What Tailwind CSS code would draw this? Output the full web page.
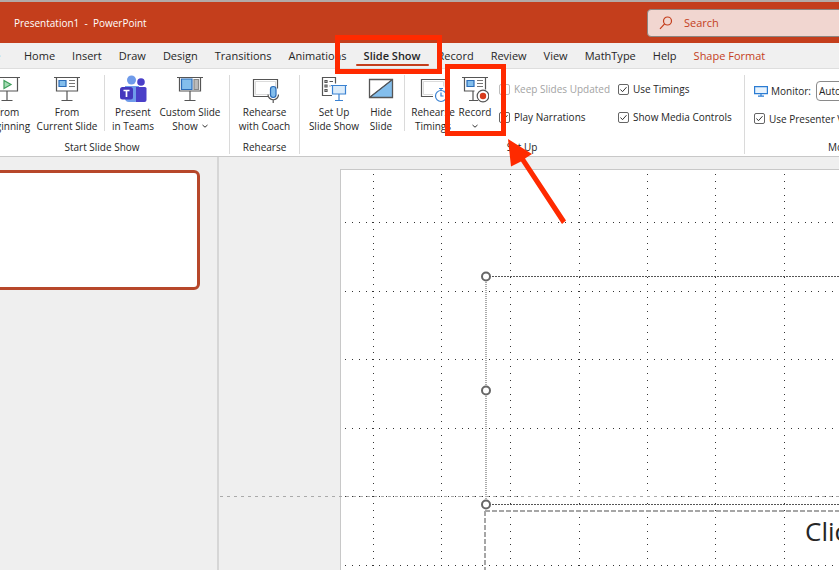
<!doctype html>
<html lang="en">
  <head>
    <meta charset="UTF-8" />
    <meta name="viewport" content="width=device-width, initial-scale=1" />
    <title>Presentation1 - PowerPoint</title>
    <script src="https://cdn.jsdelivr.net/npm/@tailwindcss/browser@4"></script>
  </head>
  <body class="relative flex h-screen flex-col overflow-hidden bg-[#efefef] font-['Open_Sans','Noto_Sans',sans-serif] text-[10px] leading-[14px] text-[#262626]">
    <!-- title bar -->
    <header class="flex h-[43px] shrink-0 items-center border-t-2 border-[#b3aaa7] bg-[#c43e1c] pl-3.5 text-white">
      <h1 class="flex-1 whitespace-pre">Presentation1  -  PowerPoint</h1>
      <label class="-mr-1 flex h-7 w-[196px] items-center gap-[11px] rounded-sm border border-[#8d8580] bg-[#f1d6d0] pl-[11px] text-[#c43e1c]">
        <svg class="size-3.5 shrink-0" viewBox="0 0 14 14" fill="none" stroke="#c43e1c" stroke-width="1.2">
          <circle cx="8.5" cy="5" r="4" />
          <path d="M5.6 7.8 1 12.8" />
        </svg>
        <input type="text" aria-label="Search" placeholder="Search" class="w-full text-[11px] outline-none placeholder:text-[#c43e1c]" />
      </label>
    </header>

    <!-- tabs -->
    <nav class="flex h-[26px] shrink-0 items-center gap-[17px] overflow-hidden border-b border-[#dedede] bg-[#f0f0f0] text-[11px] whitespace-nowrap">
      <button class="-ml-[17px] w-6 text-left">File</button>
      <button>Home</button>
      <button>Insert</button>
      <button>Draw</button>
      <button>Design</button>
      <button>Transitions</button>
      <button>Animations</button>
      <button class="relative font-semibold after:absolute after:-inset-x-2 after:top-[15px] after:h-0.5 after:rounded after:bg-[#c43e1c]">Slide Show</button>
      <button>Record</button>
      <button>Review</button>
      <button>View</button>
      <button>MathType</button>
      <button>Help</button>
      <button class="text-[#c43e1c]">Shape Format</button>
    </nav>

    <!-- ribbon -->
    <section class="flex h-[88px] shrink-0 overflow-hidden border-b border-[#c8c8c8] bg-white whitespace-nowrap">
      <div class="-ml-[25px] flex w-[255px] shrink-0 flex-col pt-1.5">
        <div class="flex h-[65px] border-r border-[#dadada]">
          <button class="flex w-16 flex-col items-center">
            <svg class="mb-0.5 h-7 w-7" viewBox="0 0 28 28" fill="none" stroke="#555" stroke-width="1.2">
              <path d="M1 2.5h26M3.5 2.5v13.5h21V2.5M14 16v9.5M8.5 25.5h11" />
              <path d="m11 5.5 7 4-7 4z" fill="#a5dcb4" stroke="#3e9e5b" />
            </svg>
            <span>From</span><span>Beginning</span>
          </button>
          <button class="flex w-14 flex-col items-center">
            <svg class="mb-0.5 h-7 w-7" viewBox="0 0 28 28" fill="none" stroke="#555" stroke-width="1.2">
              <path d="M1 2.5h26M3.5 2.5v13.5h21V2.5M14 16v9.5M8.5 25.5h11" />
              <path d="M6 5.5h7v6H6z" fill="#83beec" stroke="#2b6cb8" />
              <path d="M16 5.5h6M16 8.5h6M16 11.5h6" stroke="#777" />
            </svg>
            <span>From</span><span>Current Slide</span>
          </button>
          <span class="mr-1 ml-[9px] h-14 w-px bg-[#dadada]"></span>
          <button class="flex w-12 flex-col items-center">
            <svg class="mb-0.5 h-7 w-7" viewBox="0 0 28 28">
              <circle cx="12.5" cy="5" r="4.5" fill="#6f9bea" />
              <circle cx="22" cy="7" r="3.8" fill="#4a3fc8" />
              <path d="M6 11h14v12a4 4 0 0 1-4 4h-6a4 4 0 0 1-4-4z" fill="#6f9bea" />
              <path d="M17 12h9a1.5 1.5 0 0 1 1.5 1.5V25a2 2 0 0 1-2 2H17z" fill="#4a3fc8" />
              <rect x="1" y="12" width="13" height="12.5" rx="2.5" fill="#4438bd" />
              <path d="M4.5 15.5h6M7.5 15.5v6.5" stroke="#fff" stroke-width="1.7" />
            </svg>
            <span>Present</span><span>in Teams</span>
          </button>
          <button class="flex w-[66px] flex-col items-center">
            <svg class="mb-0.5 h-7 w-7" viewBox="0 0 28 28" fill="none" stroke="#555" stroke-width="1.2">
              <path d="M1 2.5h26M3.5 2.5v13.5h21V2.5M14 16v9.5M8.5 25.5h11" />
              <path d="M5.500 4h10.5v10.5H5.500z" fill="#83beec" stroke="#2b6cb8" />
              <path d="M18 4.500h4.500v10H18z" fill="#bbb" stroke="#888" />
            </svg>
            <span>Custom Slide</span>
            <span class="flex items-center gap-1">Show
              <svg class="size-1.5" viewBox="0 0 6 6" fill="none" stroke="#333"><path d="m.5 2 2.5 2.2L5.5 2" /></svg>
            </span>
          </button>
        </div>
        <h2 class="border-r border-[#dadada] text-center">Start Slide Show</h2>
      </div>

      <div class="flex w-[70px] shrink-0 flex-col pt-1.5">
        <div class="flex h-[65px] justify-center border-r border-[#dadada]">
          <button class="flex flex-col items-center">
            <svg class="mb-0.5 h-7 w-7" viewBox="0 0 28 28" fill="none" stroke="#555" stroke-width="1.2">
              <path d="M17 21.5H2.5v-17h24v9" />
              <path d="M4.5 6.5h20v13h-20z" stroke="#ccc" stroke-width=".7" />
              <rect x="19.5" y="11.5" width="5.5" height="11" rx="2.7" fill="#83beec" stroke="#2b6cb8" />
              <path d="M17 19.5a5.2 5.2 0 0 0 10.5 0M22.2 25v3" />
            </svg>
            <span>Rehearse</span><span>with Coach</span>
          </button>
        </div>
        <h2 class="border-r border-[#dadada] text-center">Rehearse</h2>
      </div>

      <div class="flex w-[445px] shrink-0 flex-col pt-1.5">
        <div class="flex h-[65px] border-r border-[#dadada] pl-1.5">
          <button class="flex w-14 flex-col items-center">
            <svg class="mb-0.5 h-7 w-7" viewBox="0 0 28 28" fill="none" stroke="#555" stroke-width="1.2">
              <path d="M12 20.5H2.5v-18h13v6" />
              <path d="M5 5.5h2v2H5zM5 10h2v2H5zM5 14.5h2v2H5zM9.500 6.500h3.500M9.500 11h1" />
              <path d="M11 10.5h16M12.500 10.500v8.500h13v-8.500" stroke="#3a82d2" fill="#dcecfa" />
              <path d="M19 19v6.500M15 25.500h8" stroke="#3a82d2" />
            </svg>
            <span>Set Up</span><span>Slide Show</span>
          </button>
          <button class="flex w-[38px] flex-col items-center">
            <svg class="mb-0.5 h-7 w-7" viewBox="0 0 28 28">
              <path d="M2.5 22.5 25.5 4.5v18z" fill="#83beec" stroke="#2b6cb8" />
              <path d="M2.5 4.5h23v18h-23zM2.500 22.500l23-18" fill="none" stroke="#555" stroke-width="1.3" />
            </svg>
            <span>Hide</span><span>Slide</span>
          </button>
          <span class="mx-1 h-14 w-px bg-[#dadada]"></span>
          <button class="flex w-12 flex-col items-center">
            <svg class="mb-0.5 h-7 w-7" viewBox="0 0 28 28" fill="none" stroke="#555" stroke-width="1.2">
              <path d="M14 21.5H2.500v-17h24v8" />
              <path d="M14 19.500H4.500v-13h20v5" stroke="#ccc" stroke-width=".7" />
              <g stroke="#3a82d2"><circle cx="22" cy="21" r="5.5" fill="#fff" /><path d="M20 13.500h4M22 13.500v2M22 17.500V21h2.500M26 16l1.500-1.500" /></g>
            </svg>
            <span>Rehearse</span><span>Timings</span>
          </button>
          <button class="flex w-9 flex-col items-center">
            <svg class="mb-0.5 h-7 w-7" viewBox="0 0 28 28" fill="none" stroke="#555" stroke-width="1.2">
              <path d="M1 2.5h26M3.5 2.5v13.5h10M24.5 2.5v12M12 16v9.5M8 25.5h9" />
              <path d="M6 5.500h7v6H6z" fill="#83beec" stroke="#2b6cb8" />
              <path d="M16 5.500h6M16 8.500h6M16 11.500h6" stroke="#777" />
              <circle cx="22" cy="21" r="5.8" fill="#fff" />
              <circle cx="22" cy="21" r="3.2" fill="#d83b1c" stroke="none" />
            </svg>
            <span>Record</span>
            <svg class="mt-1 size-1.5" viewBox="0 0 6 6" fill="none" stroke="#333"><path d="m.5 2 2.5 2.2L5.5 2" /></svg>
          </button>
          <div class="ml-1.5 grid h-14 grid-cols-[119px_auto] items-center">
            <label class="flex items-center gap-1 text-[#a3a3a3]">
              <input type="checkbox" disabled class="size-[11px] appearance-none rounded-xs border border-[#bdbdbd]" />Keep Slides Updated
            </label>
            <label class="flex items-center gap-1">
              <input type="checkbox" checked class="size-[11px] appearance-none rounded-xs border border-[#666]" />
              <svg class="-ml-[15px] size-[11px]" viewBox="0 0 11 11" fill="none" stroke="#333"><path d="m2.5 5.5 2 2.2 4-4.5" /></svg>Use Timings
            </label>
            <label class="flex items-center gap-1">
              <input type="checkbox" checked class="size-[11px] appearance-none rounded-xs border border-[#666]" />
              <svg class="-ml-[15px] size-[11px]" viewBox="0 0 11 11" fill="none" stroke="#333"><path d="m2.5 5.5 2 2.2 4-4.5" /></svg>Play Narrations
            </label>
            <label class="flex items-center gap-1">
              <input type="checkbox" checked class="size-[11px] appearance-none rounded-xs border border-[#666]" />
              <svg class="-ml-[15px] size-[11px]" viewBox="0 0 11 11" fill="none" stroke="#333"><path d="m2.5 5.5 2 2.2 4-4.5" /></svg>Show Media Controls
            </label>
          </div>
        </div>
        <h2 class="border-r border-[#dadada] text-center">Set Up</h2>
      </div>

      <div class="flex w-[208px] shrink-0 flex-col pt-1.5">
        <div class="h-[65px] pl-[9px]">
          <div class="grid h-14 items-center">
            <div class="flex items-center gap-[3px]">
              <svg class="h-3 w-3.5" viewBox="0 0 14 12" fill="#e8f3fd" stroke="#2b7cd3" stroke-width="1.2"><path d="M.6 1.6h12.8v7H.6zM7 8.600v2.600M4 11.200h6" /></svg>
              <label for="monitor">Monitor:</label>
              <select id="monitor" class="ml-0.5 h-5 w-[120px] appearance-none rounded-sm border border-[#8a8a8a] bg-white pl-0.5">
                <option>Automatic</option>
              </select>
            </div>
            <label class="flex items-center gap-1">
              <input type="checkbox" checked class="size-[11px] appearance-none rounded-xs border border-[#666]" />
              <svg class="-ml-[15px] size-[11px]" viewBox="0 0 11 11" fill="none" stroke="#333"><path d="m2.5 5.5 2 2.2 4-4.5" /></svg>Use Presenter View
            </label>
          </div>
        </div>
        <h2 class="text-center">Monitors</h2>
      </div>
    </section>

    <main class="flex min-h-0 flex-1">
      <!-- slide thumbnails -->
      <aside class="w-[219px] shrink-0 border-r-2 border-[#d6d6d6] pt-[13px]">
        <div class="-ml-2 h-[120px] w-[208px] rounded-md border-[3px] border-[#b7472a] bg-white"></div>
      </aside>

      <!-- editing area -->
      <div class="relative flex-1 overflow-hidden pt-3 pl-[121px]">
        <div class="h-full border-t border-l border-[#c8c8c8] bg-white"></div>
        <svg class="absolute inset-y-0 left-px h-full w-full" fill="none" shape-rendering="crispEdges">
          <g stroke="#333" stroke-dasharray="1 5.86">
            <path d="M153.5 17v800M221.5 17v800M290.5 17v800M359.5 17v800M427.5 17v800M495.5 17v800M564.5 17v800" />
            <path d="M125 65.5h1600M125 134.5h1600M125 202.5h1600M125 271.5h1600M125 339.5h1600M125 408.5h1600" />
          </g>
          <path d="M0 339.5h1800" stroke="#aaa" stroke-dasharray="3 4" />
          <path d="M266 119.5h1600M266 347.5h1600" stroke="#555" stroke-dasharray="2 1" />
          <path d="M266 119v228" stroke="#aaa" stroke-width="2" stroke-dasharray="1 1" />
          <path d="M265 354h1600M265 354v600" stroke="#a6a6a6" stroke-width="2" stroke-dasharray="5 2" />
          <g fill="#fff" stroke="#666" stroke-width="2" shape-rendering="auto">
            <circle cx="266" cy="119.5" r="4" />
            <circle cx="266" cy="233.5" r="4" />
            <circle cx="266" cy="347.5" r="4" />
          </g>
        </svg>
        <p class="absolute top-[358px] left-[586px] text-[26px] leading-8 whitespace-nowrap">Click to add subtitle</p>
      </div>
    </main>

    <!-- callouts -->
    <div class="absolute top-[35px] left-[335px] h-[39px] w-[107px] border-[5px] border-[#ff2a00]"></div>
    <div class="absolute top-[64px] left-[445px] h-[72px] w-[61px] border-[5px] border-[#ff2a00]"></div>
    <svg class="absolute top-[139px] left-[507px] h-[86px] w-[60px]" viewBox="0 0 60 86">
      <path d="M1 0 25 15 18 19.5 59 81.5 55 85 14 22.5 4 27.5z" fill="#ff2a00" />
    </svg>
  </body>
</html>
